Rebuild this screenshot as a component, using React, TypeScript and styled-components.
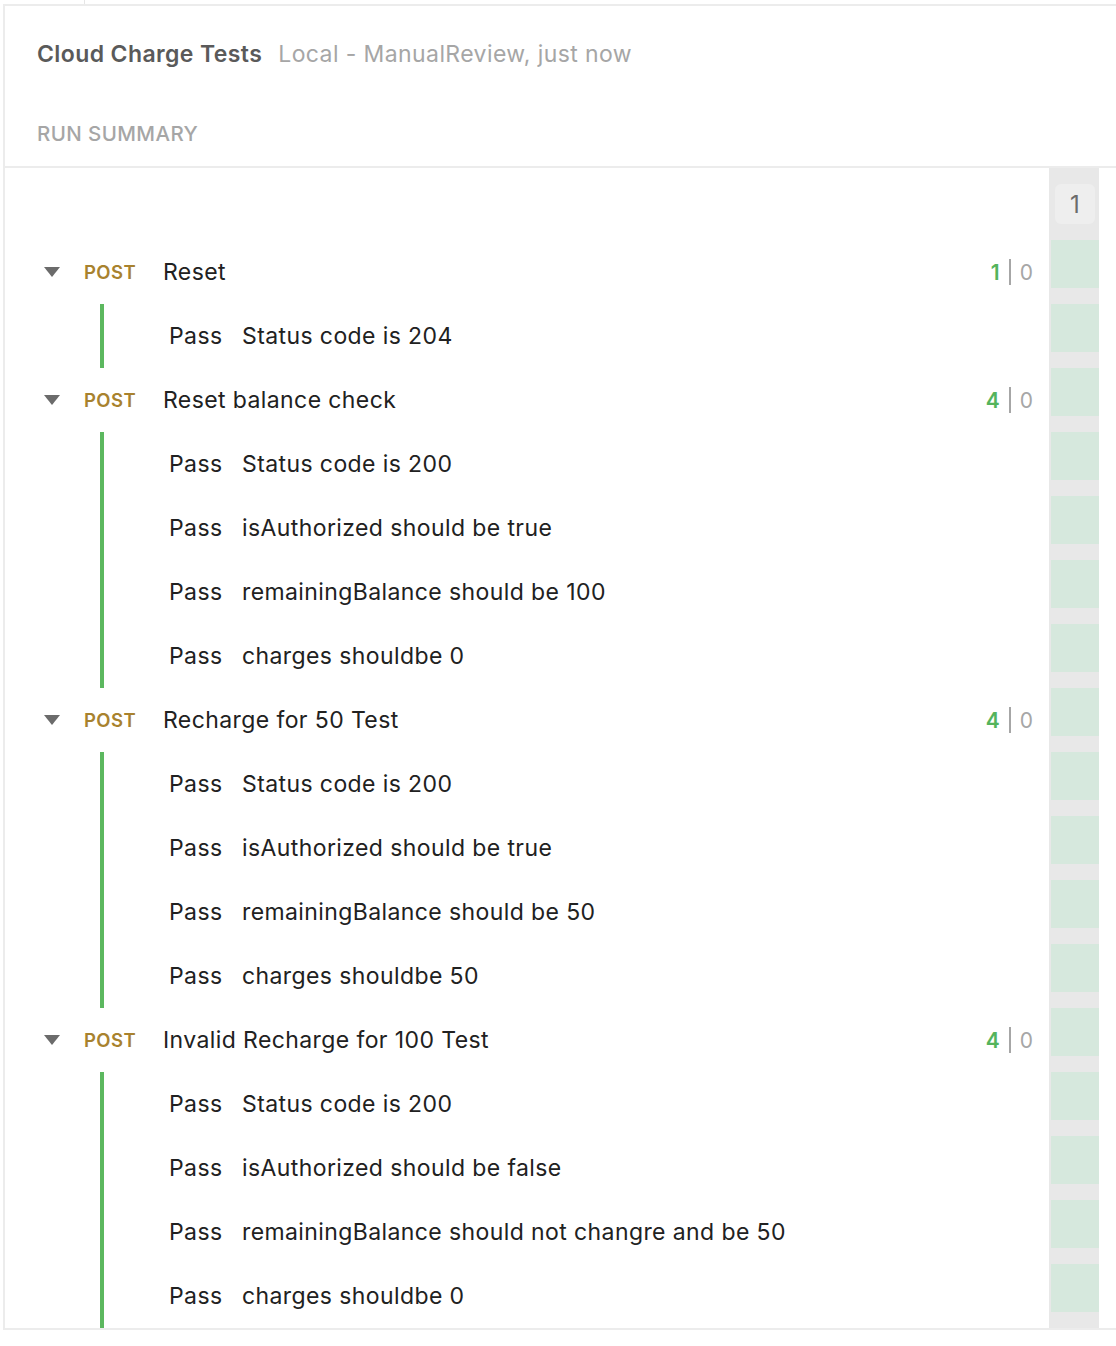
import React from "react"
import styled, { createGlobalStyle } from "styled-components"

const Global = createGlobalStyle`
    html, body {
        margin: 0;
        padding: 0;
        background: #ffffff;
    }
    body {
        font-family: Inter, "Noto Sans", "Liberation Sans", sans-serif;
        color: #212121;
        letter-spacing: 0.025em;
    }
`

type Test = { label: string }
type Request = { method: string; name: string; tests: Test[] }

const requests: Request[] = [
    { method: "POST", name: "Reset", tests: [{ label: "Status code is 204" }] },
    {
        method: "POST",
        name: "Reset balance check",
        tests: [
            { label: "Status code is 200" },
            { label: "isAuthorized should be true" },
            { label: "remainingBalance should be 100" },
            { label: "charges shouldbe 0" },
        ],
    },
    {
        method: "POST",
        name: "Recharge for 50 Test",
        tests: [
            { label: "Status code is 200" },
            { label: "isAuthorized should be true" },
            { label: "remainingBalance should be 50" },
            { label: "charges shouldbe 50" },
        ],
    },
    {
        method: "POST",
        name: "Invalid Recharge for 100 Test",
        tests: [
            { label: "Status code is 200" },
            { label: "isAuthorized should be false" },
            { label: "remainingBalance should not changre and be 50" },
            { label: "charges shouldbe 0" },
        ],
    },
]

const App = () => {
    const rowCount = requests.reduce((n, r) => n + 1 + r.tests.length, 0)
    return (
        <>
            <Global />
            <TopStrip>
                <StubLine />
            </TopStrip>
            <Frame>
                <Header>
                    <TitleLine>
                        <Title>Cloud Charge Tests</Title>
                        <Meta>Local - ManualReview, just now</Meta>
                    </TitleLine>
                    <Section>RUN SUMMARY</Section>
                </Header>
                <Body>
                    <List>
                        {requests.map((req) => (
                            <React.Fragment key={req.name}>
                                <RequestRow>
                                    <Caret />
                                    <Method>{req.method}</Method>
                                    <Name>{req.name}</Name>
                                    <Counts>
                                        <Passed>{req.tests.length}</Passed>
                                        <Divider />
                                        <Failed>0</Failed>
                                    </Counts>
                                </RequestRow>
                                {req.tests.map((t, i) => (
                                    <TestRow key={i}>
                                        <Status>Pass</Status>
                                        <Label>{t.label}</Label>
                                    </TestRow>
                                ))}
                            </React.Fragment>
                        ))}
                    </List>
                    <Iterations>
                        <IterHead>
                            <IterBox>1</IterBox>
                        </IterHead>
                        {Array.from({ length: rowCount }).map((_, i) => (
                            <Cell key={i} />
                        ))}
                    </Iterations>
                    <Gutter />
                </Body>
            </Frame>
        </>
    )
}

const TopStrip = styled.div`
    height: 4px;
    padding-left: 84px;
    box-sizing: border-box;
`

const StubLine = styled.div`
    width: 0;
    height: 4px;
    border-left: 1px solid #e6e6e6;
`

const Frame = styled.div`
    margin-left: 3px;
    border-left: 2px solid #ececec;
    border-top: 2px solid #ececec;
    border-bottom: 2px solid #ececec;
`

const Header = styled.header`
    padding: 30px 0 0 32px;
    height: 162px;
    box-sizing: border-box;
    border-bottom: 2px solid #ececec;
`

const TitleLine = styled.div`
    display: flex;
    align-items: baseline;
    gap: 16px;
    font-size: 23px;
    line-height: 36px;
`

const Title = styled.span`
    font-weight: 600;
    color: #5a5a5a;
`

const Meta = styled.span`
    color: #a6a6a6;
`

const Section = styled.div`
    margin-top: 48px;
    font-size: 20.5px;
    font-weight: 500;
    color: #a6a6a6;
    line-height: 28px;
`

const Body = styled.div`
    display: grid;
    grid-template-columns: 1fr 50px 17px;
`

const List = styled.div`
    padding: 72px 16px 0 0;
`

const Row = styled.div`
    height: 64px;
    display: flex;
    align-items: center;
    font-size: 23px;
    color: #212121;
`

const RequestRow = styled(Row)`
    padding-left: 39px;
`

const Caret = styled.span`
    width: 0;
    height: 0;
    border-left: 8px solid transparent;
    border-right: 8px solid transparent;
    border-top: 10px solid #6b6b6b;
    margin-right: 24px;
`

const Method = styled.span`
    width: 79px;
    font-size: 18.5px;
    font-weight: 600;
    color: #a8822e;
`

const Name = styled.span`
    flex: 1;
`

const Counts = styled.span`
    display: flex;
    align-items: center;
    font-size: 21px;
    gap: 9px;
    letter-spacing: 0;
`

const Passed = styled.span`
    font-weight: 600;
    color: #54b45c;
`

const Divider = styled.span`
    width: 2px;
    height: 26px;
    background: #a6a6a6;
`

const Failed = styled.span`
    color: #a6a6a6;
`

const TestRow = styled(Row)`
    margin-left: 95px;
    padding-left: 65px;
    border-left: 4px solid #5cb85f;
`

const Status = styled.span`
    width: 73px;
`

const Label = styled.span``

const Iterations = styled.div`
    background: #e8e8e8;
    padding: 0 0 8px 2px;
`

const IterHead = styled.div`
    height: 72px;
    display: flex;
    align-items: center;
    justify-content: center;
`

const IterBox = styled.div`
    width: 40px;
    height: 40px;
    border-radius: 6px;
    background: #eeeeee;
    display: flex;
    align-items: center;
    justify-content: center;
    font-size: 24px;
    color: #6b6b6b;
    letter-spacing: 0;
`

const Cell = styled.div`
    height: 48px;
    margin-bottom: 16px;
    background: #d6e8dd;

    &:last-child {
        margin-bottom: 0;
    }
`

const Gutter = styled.div``

export default App
